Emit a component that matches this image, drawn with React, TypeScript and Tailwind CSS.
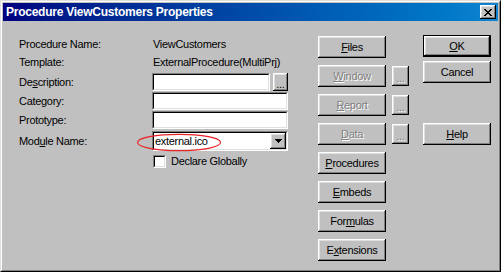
import React from "react";

const raised =
  "shadow-[inset_-1px_-1px_#000,inset_1px_1px_#fff,inset_-2px_-2px_#808080,inset_2px_2px_#dfdfdf]";

function Btn({
  children,
  disabled,
  className = "",
}: {
  children: React.ReactNode;
  disabled?: boolean;
  className?: string;
}) {
  return (
    <div
      className={`flex items-center justify-center bg-[#c0c0c0] ${raised} ${
        disabled ? "text-[#808080] [text-shadow:1px_1px_0_#fff]" : "text-black"
      } ${className}`}
    >
      {children}
    </div>
  );
}

function Sunken({
  className = "",
  children,
}: {
  className?: string;
  children?: React.ReactNode;
}) {
  return (
    <div
      className={`border border-t-[#808080] border-l-[#808080] border-r-white border-b-white ${className}`}
    >
      <div className="w-full h-full border border-t-black border-l-black border-r-[#dfdfdf] border-b-[#dfdfdf] bg-white flex items-center">
        {children}
      </div>
    </div>
  );
}

function Label({ children }: { children: React.ReactNode }) {
  return <div className="w-[133px] shrink-0">{children}</div>;
}

function MidRow({
  label,
  disabled,
  dots,
}: {
  label: React.ReactNode;
  disabled?: boolean;
  dots?: boolean;
}) {
  return (
    <div className="flex items-center h-[22px]">
      <Btn disabled={disabled} className="w-[68px] h-[22px]">
        {label}
      </Btn>
      {dots && (
        <Btn disabled={disabled} className="ml-[6px] w-[17px] h-[20px] leading-none pt-[5px]">
          ...
        </Btn>
      )}
    </div>
  );
}

export default function App() {
  return (
    <div className="w-[501px] h-[272px] bg-[#c0c0c0] font-['Liberation_Sans',Arial,sans-serif] text-[11px] tracking-[-0.3px] text-black select-none">
      <div className="w-full h-full border border-t-[#dfdfdf] border-l-[#dfdfdf] border-r-black border-b-black">
        <div className="w-full h-full border border-t-white border-l-white border-r-[#808080] border-b-[#808080] p-px flex flex-col">
          {/* Title bar */}
          <div className="h-[18px] shrink-0 flex items-center justify-between bg-linear-to-r from-[#000080] to-[#1084d0] pl-[3px] pr-[2px]">
            <span className="text-white font-bold text-[12px] tracking-[-0.25px]">
              Procedure ViewCustomers Properties
            </span>
            <Btn className="w-[16px] h-[14px]">
              <svg width="8" height="7" viewBox="0 0 8 7" shapeRendering="crispEdges">
                <path
                  d="M0 0h2v1h-2zM6 0h2v1h-2zM1 1h2v1h-2zM5 1h2v1h-2zM2 2h4v1h-4zM3 3h2v1h-2zM2 4h4v1h-4zM1 5h2v1h-2zM5 5h2v1h-2zM0 6h2v1h-2zM6 6h2v1h-2z"
                  fill="#000"
                />
              </svg>
            </Btn>
          </div>

          {/* Body */}
          <div className="flex flex-1">
            {/* Left section */}
            <div className="pl-[16px] pt-[14px] flex flex-col">
              <div className="flex items-center h-[18px]">
                <Label>Procedure Name:</Label>
                <span className="pl-px">ViewCustomers</span>
              </div>
              <div className="flex items-center h-[18px]">
                <Label>Template:</Label>
                <span className="pl-px">ExternalProcedure(MultiPrj)</span>
              </div>
              <div className="flex items-center h-[18px] mt-[2px]">
                <Label>
                  De<u className="underline-offset-1">s</u>cription:
                </Label>
                <Sunken className="w-[118px] h-[18px]" />
                <Btn className="ml-[3px] w-[15px] h-[18px] leading-none pt-[5px]">...</Btn>
              </div>
              <div className="flex items-center h-[18px] mt-[1px]">
                <Label>Category:</Label>
                <Sunken className="w-[136px] h-[18px]" />
              </div>
              <div className="flex items-center h-[18px] mt-[1px]">
                <Label>Prototype:</Label>
                <Sunken className="w-[136px] h-[18px]" />
              </div>
              <div className="flex items-center h-[20px] mt-[2px]">
                <Label>
                  Mod<u className="underline-offset-1">u</u>le Name:
                </Label>
                <div className="relative">
                  <Sunken className="w-[136px] h-[20px]">
                    <span className="flex-1 pl-px">external.ico</span>
                    <Btn className="w-[16px] h-[16px]">
                      <svg width="7" height="4" viewBox="0 0 7 4" shapeRendering="crispEdges">
                        <path d="M0 0h7v1h-7zM1 1h5v1h-5zM2 2h3v1h-3zM3 3h1v1h-1z" fill="#000" />
                      </svg>
                    </Btn>
                  </Sunken>
                  <svg
                    className="absolute left-[-16px] top-[2px] pointer-events-none"
                    width="86"
                    height="19"
                    viewBox="0 0 86 19"
                  >
                    <ellipse cx="43" cy="9.5" rx="41.5" ry="8.2" fill="none" stroke="#e8242a" strokeWidth="1.2" />
                  </svg>
                </div>
              </div>
              <div className="flex items-center h-[13px] mt-[4px]">
                <Label>{""}</Label>
                <Sunken className="ml-px w-[13px] h-[13px]" />
                <span className="ml-[5px]">Declare Globally</span>
              </div>
            </div>

            {/* Middle buttons */}
            <div className="ml-[30px] pt-[15px] flex flex-col gap-[7px]">
              <MidRow label={<span><u className="underline-offset-1">F</u>iles</span>} />
              <MidRow disabled dots label={<span><u className="underline-offset-1">W</u>indow</span>} />
              <MidRow disabled dots label={<span><u className="underline-offset-1">R</u>eport</span>} />
              <MidRow disabled dots label={<span><u className="underline-offset-1">D</u>ata</span>} />
              <MidRow label={<span><u className="underline-offset-1">P</u>rocedures</span>} />
              <MidRow label={<span><u className="underline-offset-1">E</u>mbeds</span>} />
              <MidRow label={<span>For<u className="underline-offset-1">m</u>ulas</span>} />
              <MidRow label={<span>E<u className="underline-offset-1">x</u>tensions</span>} />
            </div>

            {/* Right buttons */}
            <div className="ml-[14px] pt-[14px] flex flex-col">
              <div className="w-[68px] h-[22px] border border-black">
                <Btn className="w-full h-full">
                  <span><u className="underline-offset-1">O</u>K</span>
                </Btn>
              </div>
              <Btn className="mt-[4px] w-[68px] h-[22px]">Cancel</Btn>
              <Btn className="mt-[40px] w-[68px] h-[22px]">
                <span><u className="underline-offset-1">H</u>elp</span>
              </Btn>
            </div>
          </div>
        </div>
      </div>
    </div>
  );
}
